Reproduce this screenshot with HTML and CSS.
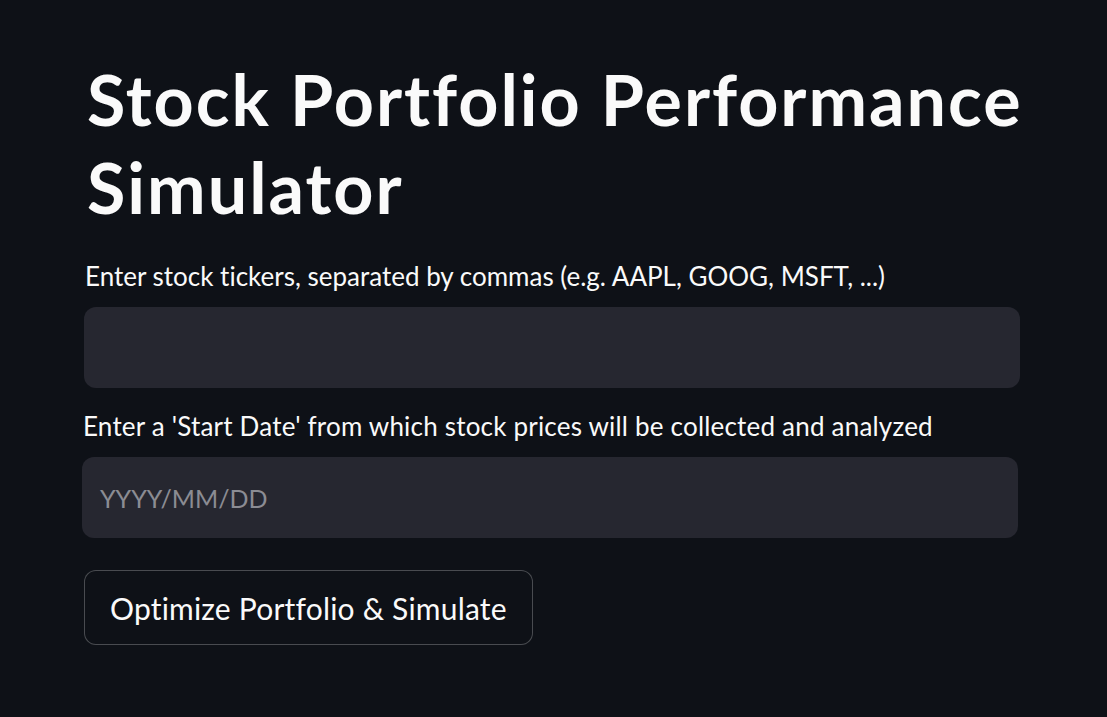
FILE: index.html
```html
<!DOCTYPE html>
<html>
<head>
<meta charset="utf-8">
<link rel="stylesheet" href="styles.css">
</head>
<body>
<main class="main">
  <h1 class="title">Stock Portfolio Performance Simulator</h1>
  <div class="field">
    <label class="label">Enter stock tickers, separated by commas (e.g. AAPL, GOOG, MSFT, ...)</label>
    <div class="input"></div>
  </div>
  <div class="field field-shift">
    <label class="label">Enter a 'Start Date' from which stock prices will be collected and analyzed</label>
    <div class="input"><span class="placeholder">YYYY/MM/DD</span></div>
  </div>
  <button class="btn">Optimize Portfolio &amp; Simulate</button>
</main>
</body>
</html>
```

FILE: styles.css
```css
html, body {
  margin: 0;
  padding: 0;
  background: #0e1117;
  color: #fafafa;
  font-family: "Lato", "Open Sans", sans-serif;
  font-variant-ligatures: none;
}
.main {
  width: 936px;
  padding: 55px 0 0 84px;
  display: flex;
  flex-direction: column;
  align-items: flex-start;
}
.title {
  width: 960px;
  margin: 0 0 7px 3px;
  font-size: 70px;
  font-weight: 700;
  line-height: 88px;
  letter-spacing: 2px;
}
.field {
  width: 936px;
  display: flex;
  flex-direction: column;
  margin-top: 22px;
}
.field-shift {
  margin-left: -2px;
  margin-top: 22px;
}
.label {
  font-size: 26px;
  line-height: 32px;
  margin: 0 0 15px 1px;
}
.field-shift .label {
  letter-spacing: 0.2px;
}
.input {
  height: 81px;
  background: #262730;
  border-radius: 12px;
  display: flex;
  align-items: center;
  padding-left: 18px;
  box-sizing: border-box;
}
.placeholder {
  color: #8b8c93;
  font-size: 25px;
}
.btn {
  margin-top: 32px;
  height: 75px;
  padding: 0 25px;
  background: #0e1117;
  color: #fafafa;
  border: 1.5px solid rgba(250, 250, 250, 0.25);
  border-radius: 12px;
  font-family: inherit;
  font-size: 30px;
  letter-spacing: 0.2px;
}
```
